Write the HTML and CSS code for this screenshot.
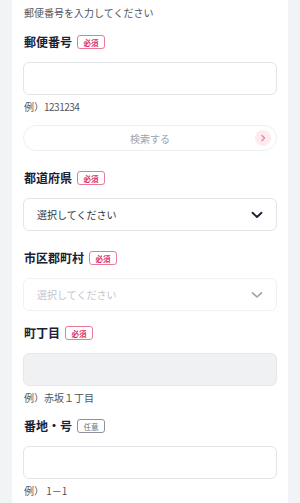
FILE: index.html
```html
<!DOCTYPE html>
<html lang="ja">
<head>
    <meta charset="UTF-8">
    <meta name="viewport" content="width=device-width, initial-scale=1.0">
    <title>住所入力</title>
    <link rel="stylesheet" href="styles.css">
</head>
<body>

    <div class="card">
        <p class="intro">郵便番号を入力してください</p>

        <div class="field">
            <div class="label-row">
                <label for="zip">郵便番号</label>
                <span class="badge">必須</span>
            </div>
            <input type="text" id="zip" class="control">
            <p class="help">例）<span class="num">1231234</span></p>
        </div>

        <button type="button" class="search-btn">
            検索する
            <span class="search-arrow">
                <svg width="8" height="8" viewBox="0 0 8 8"><path d="M3 1.5 L5.5 4 L3 6.5" fill="none" stroke="#ef7fa0" stroke-width="1.4" stroke-linecap="round" stroke-linejoin="round"/></svg>
            </span>
        </button>

        <div class="field field-lg">
            <div class="label-row">
                <label for="pref">都道府県</label>
                <span class="badge">必須</span>
            </div>
            <div class="control select">
                <span>選択してください</span>
                <svg width="12" height="8" viewBox="0 0 12 8"><path d="M1.5 1.8 L6 6 L10.5 1.8" fill="none" stroke="#1b2133" stroke-width="1.9" stroke-linecap="round" stroke-linejoin="round"/></svg>
            </div>
        </div>

        <div class="field field-lg">
            <div class="label-row">
                <label for="city">市区郡町村</label>
                <span class="badge">必須</span>
            </div>
            <div class="control select disabled">
                <span>選択してください</span>
                <svg width="12" height="8" viewBox="0 0 12 8"><path d="M1.5 1.8 L6 6 L10.5 1.8" fill="none" stroke="#9ea3ad" stroke-width="1.6" stroke-linecap="round" stroke-linejoin="round"/></svg>
            </div>
        </div>

        <div class="field field-md">
            <div class="label-row">
                <label for="town">町丁目</label>
                <span class="badge">必須</span>
            </div>
            <input type="text" id="town" class="control" disabled>
            <p class="help">例）赤坂１丁目</p>
        </div>

        <div class="field">
            <div class="label-row">
                <label for="addr">番地・号</label>
                <span class="badge badge-optional">任意</span>
            </div>
            <input type="text" id="addr" class="control">
            <p class="help">例） 1－1</p>
        </div>
    </div>

</body>
</html>
```

FILE: styles.css
```css
/* Dasar halaman */
body {
    font-family: "Noto Sans CJK JP", "Noto Sans", sans-serif;
    background-color: #f2f3f5;
    color: #1b2133;
    margin: 0;
    padding: 0 12px;
}

/* Kartu putih */
.card {
    background: #ffffff;
    padding: 5px 11px 20px;
    min-height: 503px;
    box-sizing: border-box;
}

.intro {
    margin: 0;
    font-size: 10px;
    line-height: 16px;
    color: #50545c;
    padding-left: 1px;
}

/* Blok field */
.field {
    margin-top: 14px;
}

.field-lg {
    margin-top: 20px;
}

.field-md {
    margin-top: 15px;
}

.label-row {
    display: flex;
    align-items: center;
    gap: 5px;
    height: 14px;
    padding-left: 1px;
}

.label-row label {
    font-size: 12px;
    font-weight: 700;
    line-height: 14px;
    color: #1b2133;
}

.badge {
    display: inline-flex;
    align-items: center;
    justify-content: center;
    width: 28px;
    height: 14px;
    box-sizing: border-box;
    border: 1px solid #ea7b98;
    border-radius: 3px;
    font-size: 7.5px;
    font-weight: 700;
    color: #dc2f5f;
}

.badge-optional {
    border-color: #8d929c;
    color: #6b707a;
    font-weight: 400;
}

/* Input dan select */
.control {
    display: block;
    width: 100%;
    height: 33px;
    margin: 13px 0 0;
    padding: 0 12px;
    box-sizing: border-box;
    border: 1px solid #e3e5e8;
    border-radius: 6px;
    background: #ffffff;
    font-family: inherit;
    font-size: 10px;
}

.control:disabled {
    background: #f0f1f3;
    border-color: #e6e7ea;
}

.select {
    display: flex;
    align-items: center;
    justify-content: space-between;
    padding: 0 13px 0 13px;
    color: #30343c;
}

.select.disabled {
    color: #c2c5cb;
    border-color: #f0f1f3;
}

.help {
    margin: 5px 0 0;
    font-size: 10px;
    line-height: 14px;
    color: #50545c;
    padding-left: 1px;
}

.help .num {
    letter-spacing: -0.5px;
}

/* Tombol cari */
.search-btn {
    position: relative;
    display: block;
    width: 100%;
    height: 26px;
    margin-top: 11px;
    border: 1px solid #eeeff1;
    border-radius: 13px;
    background: #ffffff;
    font-family: inherit;
    font-size: 10px;
    color: #9ea2aa;
    padding: 0;
}

.search-arrow {
    position: absolute;
    right: 5px;
    top: 50%;
    transform: translateY(-50%);
    width: 16px;
    height: 16px;
    border-radius: 50%;
    background: #fdebf0;
    display: flex;
    align-items: center;
    justify-content: center;
}
```
